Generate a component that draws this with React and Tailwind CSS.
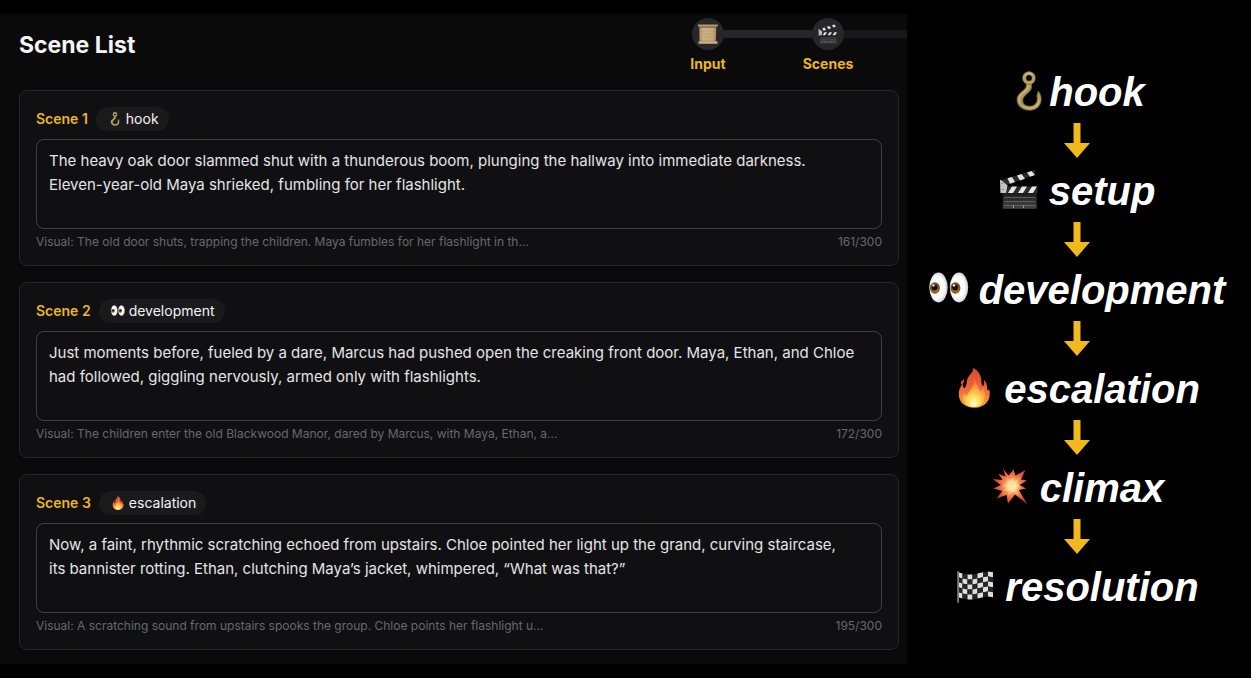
import { useId } from 'react';

function HookIcon({ className }) {
  const id = useId();
  return (
    <svg viewBox="0 0 40 40" className={className} aria-hidden="true">
      <defs>
        <linearGradient id={id} x1="0" y1="0" x2="1" y2="1">
          <stop offset="0" stopColor="#c9b277" />
          <stop offset="0.5" stopColor="#a38d54" />
          <stop offset="1" stopColor="#c2aa6c" />
        </linearGradient>
      </defs>
      <path
        d="M17.2 12.5h5.4v3.5c0 5.5-8.8 7.5-8.8 13.6 0 3.7 3 5.6 6.8 5.6 4.7 0 8-3.2 7.600-8l-.3-2.500 1.300-4.700c2.300 2.800 3.400 6 2.900 9.600C31.300 35.700 27 39.300 20.500 39.300 13.300 39.300 8 35 8 28.600c0-7.400 9.600-9 9.200-14z"
        fill={`url(#${id})`}
        stroke="#7d6937"
        strokeWidth="0.7"
      />
      <path d="M19.5 14.5c0 6.5-9.300 7-9.300 14.200 0 5 4.500 8.300 10.300 8.300 5 0 8.800-2.700 9.800-7.500" fill="none" stroke="#e2cf95" strokeWidth="1" opacity="0.8" />
      <circle cx="20" cy="7" r="4.700" fill="none" stroke="#7d6937" strokeWidth="4" />
      <circle cx="20" cy="7" r="4.700" fill="none" stroke="#b8a062" strokeWidth="3" />
      <path d="M16 5.500a4.500 4.500 0 0 1 7-2" fill="none" stroke="#dccb92" strokeWidth="1" />
    </svg>
  );
}

function ClapperIcon({ className }) {
  const id = useId();
  return (
    <svg viewBox="0 0 40 40" className={className} aria-hidden="true">
      <defs>
        <linearGradient id={`${id}b`} x1="0" y1="0" x2="0" y2="1">
          <stop offset="0" stopColor="#1b1b1b" />
          <stop offset="1" stopColor="#454545" />
        </linearGradient>
      </defs>
      <path d="M1 10.500 36 0v5L4.500 16 1 15z" fill="#2b2b2b" />
      <path d="m8.500 8.300 4.500-1.400 3 5-5 1.800zM18 5.400l4.500-1.400 3.500 4.700-5 1.700zM28 2.400l4.500-1.400 3.500 4-5 1.800z" fill="#e2e2e2" />
      <rect x="1.500" y="16.500" width="37" height="6.500" fill="#2b2b2b" />
      <path d="M13 16.500h5l-4 6.500H9zM23 16.500h5L24 23h-5zM33 16.500h5L34 23h-5z" fill="#e6e6e6" />
      <path d="M1 9.500 4 11.500l4.500 4-1.500 7.500H1.500z" fill="#c4c4c4" />
      <circle cx="3.500" cy="13.500" r="0.800" fill="#777" />
      <circle cx="4" cy="19.500" r="0.800" fill="#777" />
      <rect x="3.800" y="23" width="34" height="15.700" rx="0.800" fill={`url(#${id}b)`} />
      <path d="M5.500 27.500h30.500M5.500 31.500h30.500M5.500 35.500h30.500" stroke="#757575" strokeWidth="0.7" />
      <path d="M14.500 35.500v2.500M24.500 35.500v2.500" stroke="#c8c8c8" strokeWidth="0.7" />
    </svg>
  );
}

function EyesIcon({ className }) {
  const id = useId();
  return (
    <svg viewBox="0 0 40 40" className={className} aria-hidden="true">
      <defs>
        <radialGradient id={id} cx="0.45" cy="0.5" r="0.55">
          <stop offset="0.65" stopColor="#fff" />
          <stop offset="1" stopColor="#c9c9cf" />
        </radialGradient>
      </defs>
      {[9.5, 30].map((cx) => (
        <g key={cx}>
          <ellipse cx={cx} cy="18.500" rx="9.200" ry="15" fill={`url(#${id})`} />
          <ellipse cx={cx - 3.6} cy="19" rx="5" ry="5.700" fill="#7a4c17" />
          <ellipse cx={cx - 3.6} cy="19.800" rx="3.600" ry="4" fill="#a66c21" />
          <circle cx={cx - 3.9} cy="18.500" r="3" fill="#160d08" />
          <circle cx={cx - 5} cy="16.400" r="1.200" fill="#eee" />
        </g>
      ))}
    </svg>
  );
}

function FireIcon({ className }) {
  const id = useId();
  return (
    <svg viewBox="0 0 40 40" className={className} aria-hidden="true">
      <defs>
        <linearGradient id={`${id}o`} x1="0" y1="0" x2="0" y2="1">
          <stop offset="0" stopColor="#d9482c" />
          <stop offset="0.55" stopColor="#f26a3a" />
          <stop offset="1" stopColor="#f9a43c" />
        </linearGradient>
        <radialGradient id={`${id}i`} cx="0.5" cy="0.88" r="0.75">
          <stop offset="0" stopColor="#fffbd8" />
          <stop offset="0.35" stopColor="#ffdf57" />
          <stop offset="0.75" stopColor="#fba240" />
          <stop offset="1" stopColor="#f67a3c" />
        </radialGradient>
      </defs>
      <path
        d="M19 0c5.500 2.500 8.200 7 8.400 13.500.1 2.300.6 4 1.500 4.500 1.700-.6 1.600-3.400.8-6 3 2.200 3.400 5.500 3.300 8 0 2 .6 2.500 2.300 1.400C37.500 31 32 39.700 20.500 39.700 10 39.700 4.300 33.500 4.800 25c.2-4 1.800-6.500 4-9.500 0 2.500.3 4.500 1.700 4.800C13.500 17.500 12 13 14 9.500 15.800 6.500 19.300 4.500 19 0z"
        fill={`url(#${id}o)`}
      />
      <path d="M10 11.500c.8 2.500-.8 4-2.600 5.200C6.300 14.800 7 12.800 10 11.500z" fill="#dd5831" />
      <path
        d="M20.500 11c1.500 5 4.500 8.500 5.500 12.500 1.800-.3 2.600-1.800 3-4 3.600 7 3 18.500-8.500 19.500C11 39.300 7.500 32.500 9 25c1.200 1.800 2 2.500 3.500 2.500C16 22 20.500 18.500 20.500 11z"
        fill={`url(#${id}i)`}
      />
    </svg>
  );
}

function BurstIcon({ className }) {
  const id = useId();
  return (
    <svg viewBox="0 0 40 40" className={className} aria-hidden="true">
      <defs>
        <radialGradient id={id} gradientUnits="userSpaceOnUse" cx="22" cy="19" r="19">
          <stop offset="0" stopColor="#fffde0" />
          <stop offset="0.2" stopColor="#ffe9a0" />
          <stop offset="0.45" stopColor="#f58a52" />
          <stop offset="1" stopColor="#cf3520" />
        </radialGradient>
      </defs>
      <path
        d="M13 1.500 18.500 8.500 23.500 2.500 25.500 8.500 35.500 3 31 12.500 37 13.500 29.500 18 36 21.500 29 23 37 37 25 27.500 18 36.500 16.500 28 6.500 31.500 12.500 24 3 21.500 11 18 2.500 12 12.500 13 8 6.500 15.500 9.500z"
        fill={`url(#${id})`}
      />
      <path d="m17 10 4 6 2-7 1 7 6-6-4 8 6 1-6.500 2 4 8-7-6-4 7v-7l-6 1.500 5-4-6-2.500 6-.5z" fill="#ffd98a" opacity="0.45" />
    </svg>
  );
}

const FLAG_X = [4, 7.5, 12.5, 17.5, 22.5, 28, 33, 38];
const FLAG_TOP = [6.5, 7.5, 8.5, 8.5, 7.5, 6.2, 5.6, 6.2];

function FlagIcon({ className }) {
  const cells = [];
  for (let c = 0; c < 7; c += 1) {
    for (let r = 0; r < 5; r += 1) {
      const x1 = FLAG_X[c];
      const x2 = FLAG_X[c + 1];
      const a = FLAG_TOP[c] + r * 5;
      const b = FLAG_TOP[c + 1] + r * 5;
      cells.push(
        <polygon
          key={`${c}-${r}`}
          points={`${x1},${a} ${x2},${b} ${x2},${b + 5} ${x1},${a + 5}`}
          fill={(c + r) % 2 ? '#262626' : '#dedede'}
        />,
      );
    }
  }
  return (
    <svg viewBox="0 0 40 40" className={className} aria-hidden="true">
      {cells}
      <rect x="2.300" y="5" width="1.600" height="32" rx="0.800" fill="#8d8d8d" />
    </svg>
  );
}

function ScrollIcon({ className }) {
  const id = useId();
  return (
    <svg viewBox="0 0 40 40" className={className} aria-hidden="true">
      <defs>
        <linearGradient id={id} x1="0" y1="0" x2="1" y2="0">
          <stop offset="0" stopColor="#a98d66" />
          <stop offset="0.25" stopColor="#ccb086" />
          <stop offset="0.8" stopColor="#c6a97c" />
          <stop offset="1" stopColor="#a58860" />
        </linearGradient>
      </defs>
      <path d="M2.500 4h34l-1 32H3z" fill={`url(#${id})`} />
      <path d="M7 14h25M7 20h25M7 26h25" stroke="#b39669" strokeWidth="1" />
      <path d="M0 .5q2 .8 4 .3h32q2 .3 3.500-.3V5q-2-.5-4 .3H4Q2 4.800 0 5z" fill="#b5986c" />
      <path d="M2.500 5.300h34v1.700h-34z" fill="#58452c" />
      <path d="M1 34.500q2 .5 3 0h31q2 .5 4 0v5H1z" fill="#cdb185" />
      <path d="M3 33.600h33v1H3z" fill="#94794f" />
    </svg>
  );
}

function DownArrow() {
  return (
    <svg viewBox="0 0 26 35" className="block h-[35px] w-[26px]" aria-hidden="true">
      <path d="M9.500 0h7v20H26L13 35 0 20h9.500z" fill="#f2b91d" />
    </svg>
  );
}

const SCENES = [
  {
    id: 1,
    tag: 'hook',
    Icon: HookIcon,
    text: 'The heavy oak door slammed shut with a thunderous boom, plunging the hallway into immediate darkness.\nEleven-year-old Maya shrieked, fumbling for her flashlight.',
    visual: 'The old door shuts, trapping the children. Maya fumbles for her flashlight in th...',
    count: '161/300',
  },
  {
    id: 2,
    tag: 'development',
    Icon: EyesIcon,
    text: 'Just moments before, fueled by a dare, Marcus had pushed open the creaking front door. Maya, Ethan, and Chloe had followed, giggling nervously, armed only with flashlights.',
    visual: 'The children enter the old Blackwood Manor, dared by Marcus, with Maya, Ethan, a...',
    count: '172/300',
  },
  {
    id: 3,
    tag: 'escalation',
    Icon: FireIcon,
    text: 'Now, a faint, rhythmic scratching echoed from upstairs. Chloe pointed her light up the grand, curving staircase,\nits bannister rotting. Ethan, clutching Maya’s jacket, whimpered, “What was that?”',
    visual: 'A scratching sound from upstairs spooks the group. Chloe points her flashlight u...',
    count: '195/300',
  },
];

const STAGES = [
  { name: 'hook', Icon: HookIcon, gap: 'gap-0' },
  { name: 'setup', Icon: ClapperIcon, gap: 'gap-2.5' },
  { name: 'development', Icon: EyesIcon, gap: 'gap-2.5' },
  { name: 'escalation', Icon: FireIcon, gap: 'gap-2.5' },
  { name: 'climax', Icon: BurstIcon, gap: 'gap-2.5' },
  { name: 'resolution', Icon: FlagIcon, gap: 'gap-2.5' },
];

function Step({ label, Icon, before, after }) {
  return (
    <li className="w-[120px]">
      <div className="flex h-8 items-center">
        <span className={`h-2 flex-1 ${before}`} />
        <span className="flex size-8 items-center justify-center rounded-full bg-[#27272a]">
          <Icon className="size-5" />
        </span>
        <span className={`h-2 flex-1 ${after}`} />
      </div>
      <p className="mt-1 text-center text-sm font-bold text-[#eab720]">{label}</p>
    </li>
  );
}

function SceneCard({ scene }) {
  const { id, tag, Icon, text, visual, count } = scene;
  return (
    <li className="rounded-lg border border-[#252527] bg-[#101012] p-4">
      <div className="flex h-6 items-center gap-2">
        <label htmlFor={`scene-${id}`} className="text-sm font-semibold text-[#eab720]">
          Scene {id}
        </label>
        <span className="flex h-6 items-center gap-1 rounded-full bg-[#1a1a1c] pr-2.5 pl-3 text-sm text-[#f4f4f5]">
          <Icon className="size-3.5" />
          {tag}
        </span>
      </div>
      <textarea
        id={`scene-${id}`}
        rows={3}
        defaultValue={text}
        className="mt-2 block w-full resize-none overflow-hidden rounded-lg border border-[#3f3f42] bg-[#101012] px-3 pt-[9px] pb-[7px] text-[15px] leading-6 text-[#e4e4e7] outline-none"
      />
      <div className="mt-1.5 flex justify-between text-xs leading-[14px] text-[#68686e]">
        <p>Visual: {visual}</p>
        <p>{count}</p>
      </div>
    </li>
  );
}

export default function App() {
  return (
    <div className="grid min-h-screen grid-cols-[907fr_344fr] bg-black font-['Inter',sans-serif]">
      <main className="my-3.5 self-start bg-[#0a0a0a] pb-3.5">
        <header className="flex h-[76px] justify-between pt-1 pl-[19px]">
          <h1 className="mt-[11px] text-[23px] leading-8 font-bold text-[#f4f4f5]">Scene List</h1>
          <div className="flex">
            <ol className="flex">
              <Step label="Input" Icon={ScrollIcon} before="bg-transparent" after="bg-[#27272a]" />
              <Step label="Scenes" Icon={ClapperIcon} before="bg-[#27272a]" after="bg-[#18181b]" />
            </ol>
            <span className="mt-3 h-2 w-[19px] bg-[#18181b]" />
          </div>
        </header>
        <ul className="flex flex-col gap-4 pr-2 pl-[19px]">
          {SCENES.map((scene) => (
            <SceneCard key={scene.id} scene={scene} />
          ))}
        </ul>
      </main>
      <aside className="flex flex-col items-center justify-center pr-1 pb-0.5">
        {STAGES.map(({ name, Icon, gap }, index) => (
          <div key={name} className="flex flex-col items-center">
            {index > 0 && <DownArrow />}
            <p
              className={`flex h-16 items-center ${gap} font-['Liberation_Sans',Arial,sans-serif] text-[40px] font-bold text-white italic`}
            >
              <Icon className="size-10" />
              <span className="pt-0.5">{name}</span>
            </p>
          </div>
        ))}
      </aside>
    </div>
  );
}
